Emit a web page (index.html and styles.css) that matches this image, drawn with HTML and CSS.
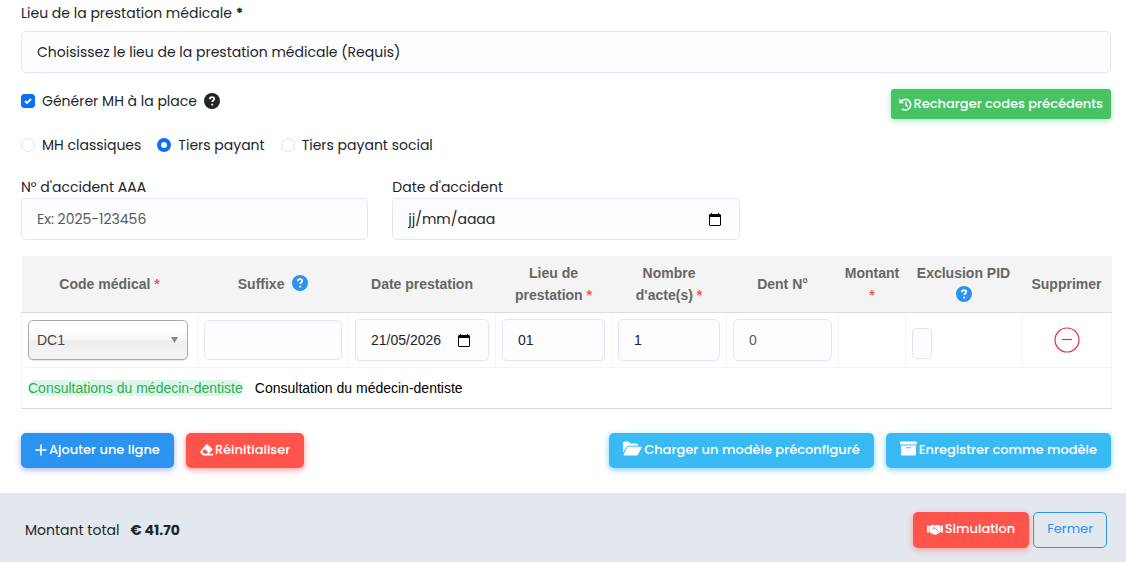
FILE: index.html
```html
<!DOCTYPE html>
<html lang="fr">
<head>
    <meta charset="UTF-8">
    <meta name="viewport" content="width=device-width, initial-scale=1.0">
    <title>Prestation médicale</title>
    <link rel="stylesheet" href="styles.css">
</head>
<body>
    <form class="prestation-form">
        <div class="content">
            <!-- Lieu de la prestation -->
            <label class="form-label" for="lieu">Lieu de la prestation médicale <b>*</b></label>
            <select id="lieu" class="form-control lieu-select">
                <option>Choisissez le lieu de la prestation médicale (Requis)</option>
            </select>

            <!-- Options MH -->
            <div class="options-row">
                <div class="check">
                    <input type="checkbox" id="generer-mh" class="check-input" checked>
                    <label for="generer-mh">Générer MH à la place</label>
                    <svg class="help dark" viewBox="0 0 16 16"><circle cx="8" cy="8" r="8"/><path d="M5.8 6.2C5.9 4.8 6.8 4.2 8 4.2s2.2.7 2.2 1.9C10.200 7.500 8.200 7.500 8.200 9.100"/><path d="M8.200 10.700v1.700"/></svg>
                </div>
                <button type="button" class="btn btn-green">
                    <svg width="13" height="13" viewBox="0 0 13 13"><path d="M1.800 4A5.300 5.300 0 1 1 3 10.800M6.800 3.800v3l2 1.700" fill="none" stroke="#fff" stroke-width="1.600"/><path d="M.3.600 5 5.300H.3z" fill="#fff"/></svg>
                    Recharger codes précédents
                </button>
            </div>
            <div class="radio-row">
                <div class="check">
                    <input type="radio" name="type-mh" id="mh-classique" class="check-input">
                    <label for="mh-classique">MH classiques</label>
                </div>
                <div class="check">
                    <input type="radio" name="type-mh" id="tiers-payant" class="check-input" checked>
                    <label for="tiers-payant">Tiers payant</label>
                </div>
                <div class="check">
                    <input type="radio" name="type-mh" id="tiers-social" class="check-input">
                    <label for="tiers-social">Tiers payant social</label>
                </div>
            </div>

            <!-- Accident -->
            <div class="accident-grid">
                <div>
                    <label class="form-label" for="accident-num">N° d'accident AAA</label>
                    <input type="text" id="accident-num" class="form-control" placeholder="Ex: 2025-123456">
                </div>
                <div>
                    <label class="form-label" for="accident-date">Date d'accident</label>
                    <div class="form-control date-field">
                        <input type="text" id="accident-date" class="date-input" value="jj/mm/aaaa">
                        <svg class="calendar" viewBox="0 0 12 13"><path d="M2 0h1v1h6V0h1v1h1l1 1v10l-1 1H1l-1-1V2l1-1h1zM1 4v8h10V4z" fill-rule="evenodd"/></svg>
                    </div>
                </div>
            </div>

            <!-- Lignes de prestation -->
            <table class="codes-table">
                <colgroup>
                    <col class="col-code">
                    <col class="col-suffixe">
                    <col class="col-date">
                    <col class="col-lieu">
                    <col class="col-nombre">
                    <col class="col-dent">
                    <col class="col-montant">
                    <col class="col-exclusion">
                    <col class="col-supprimer">
                </colgroup>
                <thead>
                    <tr>
                        <th>Code médical <span class="required">*</span></th>
                        <th>Suffixe&nbsp; <svg class="help blue" viewBox="0 0 16 16"><circle cx="8" cy="8" r="8"/><path d="M5.8 6.2C5.9 4.8 6.8 4.2 8 4.2s2.2.7 2.2 1.9C10.200 7.500 8.200 7.500 8.200 9.100"/><path d="M8.200 10.700v1.700"/></svg></th>
                        <th>Date prestation</th>
                        <th>Lieu de<br>prestation <span class="required">*</span></th>
                        <th>Nombre<br>d'acte(s) <span class="required">*</span></th>
                        <th>Dent N°</th>
                        <th>Montant <span class="required">*</span></th>
                        <th>Exclusion PID <svg class="help blue" viewBox="0 0 16 16"><circle cx="8" cy="8" r="8"/><path d="M5.8 6.2C5.9 4.8 6.8 4.2 8 4.2s2.2.7 2.2 1.9C10.200 7.500 8.200 7.500 8.200 9.100"/><path d="M8.200 10.700v1.700"/></svg></th>
                        <th>Supprimer</th>
                    </tr>
                </thead>
                <tbody>
                    <tr>
                        <td>
                            <select class="code-select" aria-label="Code médical">
                                <option>DC1</option>
                            </select>
                        </td>
                        <td><input type="text" class="form-control suffixe" aria-label="Suffixe"></td>
                        <td>
                            <div class="form-control date-field">
                                <input type="text" class="date-input" value="21/05/2026" aria-label="Date prestation">
                                <svg class="calendar" viewBox="0 0 12 13"><path d="M2 0h1v1h6V0h1v1h1l1 1v10l-1 1H1l-1-1V2l1-1h1zM1 4v8h10V4z" fill-rule="evenodd"/></svg>
                            </div>
                        </td>
                        <td><input type="text" class="form-control" value="01" aria-label="Lieu de prestation"></td>
                        <td><input type="text" class="form-control" value="1" aria-label="Nombre d'actes"></td>
                        <td><input type="text" class="form-control" placeholder="0" aria-label="Dent N°"></td>
                        <td></td>
                        <td><input type="checkbox" class="exclusion" aria-label="Exclusion PID"></td>
                        <td>
                            <button type="button" class="btn-remove" aria-label="Supprimer">
                                <svg width="26" height="26" viewBox="0 0 26 26" fill="none" stroke="#dc3545" stroke-width="1.200"><circle cx="13" cy="13" r="12"/><path d="M8 12.500h10"/></svg>
                            </button>
                        </td>
                    </tr>
                    <tr class="description">
                        <td colspan="9"><span class="badge">Consultations du médecin-dentiste</span>Consultation du médecin-dentiste</td>
                    </tr>
                </tbody>
            </table>

            <div class="actions">
                <button type="button" class="btn btn-blue">
                    <svg width="12" height="12" viewBox="0 0 12 12"><path d="M6 1v10M1 6h10" stroke="#fff" stroke-width="1.600" stroke-linecap="round"/></svg>
                    Ajouter une ligne
                </button>
                <button type="reset" class="btn btn-red">
                    <svg width="13" height="12" viewBox="0 0 13 12" fill="#fff"><path fill-rule="evenodd" d="M6 .8q1-1 2 0l4 3.700q.8.900 0 1.800L8.700 9.800H13v1.600H3.200L.7 9q-1-1 0-2zM4.800 5 2.300 7.800l2 2h2.400l1.400-1.600z"/></svg>
                    Réinitialiser
                </button>
                <button type="button" class="btn btn-sky push">
                    <svg class="raised" width="19" height="15" viewBox="0 0 19 15" fill="#fff"><path d="M0 11.500V2Q0 .5 1.500.5h4L7.500 2.500h6Q15 2.500 15 4v.7H5.500q-1.300 0-2 1.200z"/><path d="M5.500 5.700h12.600q1 0 .5 1l-3.500 6.800q-.5 1-1.600 1H1q-.9 0-.5-.8L4 6.500q.5-.8 1.500-.8z"/></svg>
                    Charger un modèle préconfiguré
                </button>
                <button type="button" class="btn btn-sky">
                    <svg class="raised" width="17" height="15" viewBox="0 0 17 15" fill="#fff"><rect y=".5" width="17" height="3" rx=".8"/><path fill-rule="evenodd" d="M1 4.500h15v8.500q0 1.500-1.500 1.500h-12Q1 14.500 1 13zM6 6.300v1h5v-1z"/></svg>
                    Enregistrer comme modèle
                </button>
            </div>
        </div>

        <div class="footer">
            <span>Montant total</span>
            <strong>€ 41.70</strong>
            <button type="button" class="btn btn-red push">
                <svg width="16" height="11" viewBox="0 0 16 11" fill="#fff"><path d="M0 1.500h1.800v7H0zM14.200 1.500H16v7h-1.800z"/><path d="M2.300 2 5.500.8 8 1.300 10.500.8l3.200 1.200v6L10.500 10q-2.500 1.300-5 0L2.300 8z"/><path d="M8.500 2 5.800 4.600q1 1.300 2.600 0l3.300 3" fill="none" stroke="#ff544c" stroke-width=".7"/></svg>
                Simulation
            </button>
            <button type="button" class="btn btn-outline">Fermer</button>
        </div>
    </form>
</body>
</html>
```
FILE: styles.css
```css
* {
    box-sizing: border-box;
}
body {
    margin: 0;
    background: #fff;
    color: #212529;
    font-family: Poppins, Inter, sans-serif;
    font-size: 14px;
    line-height: 22px;
}
input, select, button {
    margin: 0;
    font-family: inherit;
    font-size: 14px;
    color: #212529;
}
.content {
    padding: 2px 15px 25px 21px;
}
.form-label {
    display: block;
}
.form-control {
    display: block;
    width: 100%;
    height: 42px;
    padding: 0 15px;
    border: 1px solid #e4e3fb;
    border-radius: 5px;
    background: #fdfdff;
    outline: none;
}
.form-control::placeholder {
    color: #595c5f;
    opacity: 1;
}
.lieu-select {
    appearance: none;
    margin-top: 7px;
}

/* Cases et radios */
.options-row {
    display: flex;
    justify-content: space-between;
    align-items: flex-start;
    padding-top: 16px;
}
.options-row .check {
    padding-top: 1px;
}
.check {
    display: flex;
    align-items: center;
    gap: 7px;
}
.check-input {
    appearance: none;
    width: 14px;
    height: 14px;
    border: 1px solid #dee2e6;
    background: #fff;
}
.check-input[type="checkbox"] {
    border-radius: 3px;
}
.check-input[type="radio"] {
    border-radius: 50%;
}
.check-input:checked {
    border-color: #0d6efd;
    background-color: #0d6efd;
}
.check-input[type="checkbox"]:checked {
    background-image: url("data:image/svg+xml,%3Csvg xmlns='http://www.w3.org/2000/svg' viewBox='0 0 12 12'%3E%3Cpath d='m3 6 2 2 4-4' fill='none' stroke='white' stroke-width='1.800'/%3E%3C/svg%3E");
}
.check-input[type="radio"]:checked {
    border-width: 4px;
    background: #fff;
}
.radio-row {
    display: flex;
    gap: 16px;
    padding: 15px 0 20px;
}
.help {
    width: 16px;
    height: 16px;
    fill: #212529;
    vertical-align: -2px;
}
.help path {
    fill: none;
    stroke: #fff;
    stroke-width: 1.800;
}
.help.blue {
    fill: #2b93f0;
}
.accident-grid {
    display: grid;
    grid-template-columns: repeat(3, 1fr);
    gap: 24px;
    margin-bottom: 16px;
}
.date-field {
    display: flex;
    align-items: center;
}
.date-input {
    flex: 1;
    min-width: 0;
    padding: 0;
    border: none;
    background: none;
    outline: none;
}
.calendar {
    width: 12px;
    height: 13px;
    margin-right: 3px;
    fill: #000;
}

/* Tableau des codes */
.codes-table {
    width: 100%;
    table-layout: fixed;
    border-collapse: collapse;
    border-bottom: 1px solid #dcdce6;
    font-family: "Liberation Sans", Arial, sans-serif;
    color: #000;
}
.col-code { width: 176px; }
.col-suffixe { width: 151px; }
.col-date { width: 147px; }
.col-lieu { width: 116px; }
.col-nombre { width: 115px; }
.col-dent { width: 112px; }
.col-montant { width: 67px; }
.col-exclusion { width: 116px; }
.col-supprimer { width: 90px; }
.codes-table th {
    height: 56px;
    padding: 6px 4px;
    border-bottom: 1px solid #dcdce6;
    background: #f4f4f4;
    color: #666;
    font-weight: bold;
}
.codes-table td {
    padding: 6px;
    border: 1px solid #f4f4f4;
}
.codes-table .description td {
    height: 41px;
    border-bottom-color: #dcdce6;
}
.required {
    color: #ff544c;
}
.code-select {
    display: block;
    appearance: none;
    width: 160px;
    max-width: 100%;
    height: 40px;
    padding: 0 8px;
    border: 1px solid #aaa;
    border-radius: 5px;
    background: url("data:image/svg+xml,%3Csvg xmlns='http://www.w3.org/2000/svg' width='7' height='6'%3E%3Cpath d='M0 0h7L3.500 6z' fill='%23888'/%3E%3C/svg%3E") no-repeat right 9px center, linear-gradient(#fff 20%, #f6f6f6 50%, #eee 52%, #f4f4f4 100%);
    box-shadow: 0 1px 1px rgba(0, 0, 0, 0.1);
    color: #444;
}
.form-control.suffixe {
    height: 40px;
}
.exclusion {
    display: block;
    appearance: none;
    width: 20px;
    height: 31px;
    margin-top: 7px;
    border: 1px solid #e4e3fb;
    border-radius: 4px;
    background: #fdfdff;
}
.btn-remove {
    display: block;
    margin: 0 auto;
    padding: 0;
    border: none;
    background: none;
    cursor: pointer;
}
.btn-remove svg {
    display: block;
}
.badge {
    margin-right: 12px;
    border-radius: 8px;
    background: #dff5ea;
    color: #28b04f;
}

/* Boutons */
.btn {
    display: flex;
    align-items: center;
    justify-content: center;
    gap: 2px;
    height: 35px;
    padding: 0 13px 2px;
    border: 1px solid transparent;
    border-radius: 5px;
    color: #fff;
    font-size: 13px;
    font-weight: 500;
    white-space: nowrap;
    cursor: pointer;
}
.btn-green {
    height: 30px;
    padding: 0 7px;
    border-radius: 3px;
    background: #47c363;
    box-shadow: 0 2px 6px #a8e5b5;
}
.btn-blue {
    background: #2b93f0;
    box-shadow: 0 2px 6px #acb5f6;
}
.btn-red {
    background: #ff544c;
    box-shadow: 0 2px 6px #fd9b96;
}
.btn-sky {
    background: #3abaf4;
    box-shadow: 0 2px 6px #82d3f8;
}
.btn-outline {
    border-color: #2b93f0;
    background: none;
    color: #2b93f0;
    font-weight: 400;
}
.raised {
    margin-bottom: 2px;
}
.push {
    margin-left: auto;
}
.actions {
    display: flex;
    gap: 12px;
    padding-top: 24px;
}
.footer {
    display: flex;
    align-items: center;
    gap: 4px;
    min-height: 69px;
    padding: 5px 19px 0 25px;
    background: #e2e8ee;
}
.footer strong {
    margin-left: 7px;
}
.footer .btn {
    height: 36px;
}
```
